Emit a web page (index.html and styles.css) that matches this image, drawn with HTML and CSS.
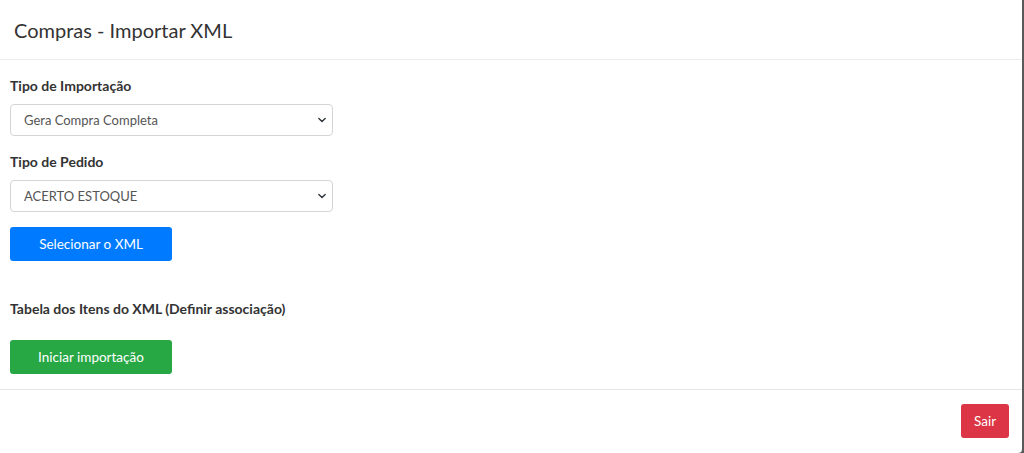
FILE: index.html
```html
<!DOCTYPE html>
<html lang="pt-BR">
<head>
    <meta charset="UTF-8">
    <meta name="viewport" content="width=device-width, initial-scale=1.0">
    <title>Compras - Importar XML</title>
    <link rel="stylesheet" href="styles.css">
</head>
<body>
    <div class="modal">
        <div class="modal-header">
            <h4 class="modal-title">Compras - Importar XML</h4>
        </div>

        <div class="modal-body">
            <label class="form-label" for="tipoImportacao">Tipo de Importação</label>
            <select class="form-select" id="tipoImportacao">
                <option>Gera Compra Completa</option>
            </select>

            <label class="form-label" for="tipoPedido">Tipo de Pedido</label>
            <select class="form-select" id="tipoPedido">
                <option>ACERTO ESTOQUE</option>
            </select>

            <button class="btn btn-primary">Selecionar o XML</button>

            <div class="table-title">Tabela dos Itens do XML (Definir associação)</div>

            <button class="btn btn-success">Iniciar importação</button>
        </div>

        <div class="modal-footer">
            <button class="btn btn-danger">Sair</button>
        </div>
    </div>
</body>
</html>
```

FILE: styles.css
```css
body {
    font-family: "Lato", "Noto Sans", sans-serif;
    background-color: #5a5a5a;
    margin: 0;
    height: 453px;
    overflow: hidden;
}
.modal {
    background-color: #fff;
    width: 1022px;
    height: 453px;
    border-radius: 0 0 4px 0;
}
.modal-header {
    height: 60px;
    border-bottom: 1px solid #ececec;
    box-sizing: border-box;
    display: flex;
    align-items: center;
    padding: 0 14px;
}
.modal-title {
    margin: 0;
    font-size: 20px;
    font-weight: 400;
    color: #333;
}
.modal-body {
    padding: 17px 10px 15px;
    display: flex;
    flex-direction: column;
    align-items: flex-start;
    border-bottom: 1px solid #e6e6e6;
}
.form-label {
    font-size: 14px;
    line-height: 17px;
    font-weight: 700;
    color: #333;
    margin-bottom: 10px;
}
.form-select {
    appearance: none;
    width: 323px;
    height: 32px;
    box-sizing: border-box;
    font-family: inherit;
    font-size: 13px;
    color: #555;
    background-color: #fff;
    background-image: url("data:image/svg+xml,%3csvg xmlns='http://www.w3.org/2000/svg' viewBox='0 0 16 16'%3e%3cpath fill='none' stroke='%23343a40' stroke-linecap='round' stroke-linejoin='round' stroke-width='2.4' d='M3 5.5l5 5 5-5'/%3e%3c/svg%3e");
    background-repeat: no-repeat;
    background-position: right 5px center;
    background-size: 10px 10px;
    border: 1px solid #d5d5d5;
    border-radius: 4px;
    padding: 0 24px 0 13px;
    margin-bottom: 17px;
}
.form-select + .btn {
    margin-top: -2px;
}
.btn {
    font-family: inherit;
    font-size: 13.5px;
    color: #fff;
    border: none;
    border-radius: 3px;
    height: 34px;
    cursor: pointer;
}
.btn-primary {
    background-color: #007bff;
    width: 162px;
}
.btn-success {
    background-color: #28a745;
    width: 162px;
}
.btn-danger {
    background-color: #dc3545;
    width: 48px;
}
.table-title {
    font-size: 14px;
    line-height: 17px;
    font-weight: 700;
    color: #333;
    margin: 39px 0 23px;
}
.modal-footer {
    display: flex;
    justify-content: flex-end;
    padding: 14px 13px;
}
```
